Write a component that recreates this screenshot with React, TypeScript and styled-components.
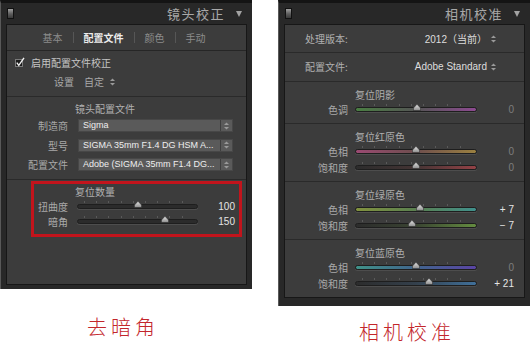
import styled, { createGlobalStyle } from "styled-components";

const GlobalStyle = createGlobalStyle`
  html, body { margin: 0; padding: 0; background: #ffffff; }
  body { font-family: "Noto Sans CJK SC", "Noto Sans", sans-serif; }
`;

const Page = styled.div`
  width: 530px;
  height: 346px;
  overflow: hidden;
  display: flex;
  gap: 26px;
  align-items: flex-start;
`;

const Column = styled.div`
  width: 252px;
  display: flex;
  flex-direction: column;
  align-items: center;
`;

const Frame = styled.div<{ $pad: number }>`
  width: 252px;
  box-sizing: border-box;
  background: #282828;
  border-top: 3px solid #141414;
  border-left: 1px solid #595959;
  padding: 0 5px ${(p) => p.$pad}px 5px;
  display: flex;
  flex-direction: column;
`;

const Header = styled.div`
  height: 21px;
  display: flex;
  align-items: center;
`;

const Toggle = styled.span`
  width: 5px;
  height: 9px;
  margin-left: 1px;
  border: 1px solid #111;
  background: linear-gradient(#a0a0a0, #5c5c5c 55%, #3a3a3a);
`;

const Title = styled.span`
  margin-left: auto;
  font-size: 13px;
  line-height: 1;
  color: #a8a8a8;
  letter-spacing: 1.5px;
`;

const Caret = styled.span`
  width: 0;
  height: 0;
  margin: 1px 5px 0 11px;
  border-left: 3.5px solid transparent;
  border-right: 3.5px solid transparent;
  border-top: 6px solid #a3a3a3;
`;

const Body = styled.div<{ $h: number }>`
  height: ${(p) => p.$h}px;
  box-sizing: border-box;
  overflow: hidden;
  background: #3c3c3c;
  border: 1px solid #171717;
  display: flex;
  flex-direction: column;
  font-size: 10px;
  color: #a9a9a9;
`;

const TabBar = styled.div`
  height: 25px;
  padding-right: 5px;
  display: flex;
  align-items: center;
  justify-content: center;
  gap: 10px;
  border-bottom: 1px solid #262626;
`;

const Tab = styled.span<{ $active?: boolean }>`
  color: ${(p) => (p.$active ? "#ececec" : "#8c8c8c")};
  font-weight: ${(p) => (p.$active ? 700 : 400)};
`;

const TabSep = styled.span`
  width: 1px;
  height: 11px;
  background: #565656;
`;

const Block = styled.div<{ $pt: number; $pb: number }>`
  padding: ${(p) => p.$pt}px 0 ${(p) => p.$pb}px;
  border-bottom: 1px solid #2a2a2a;
  display: flex;
  flex-direction: column;
  &:last-child {
    border-bottom: none;
  }
`;

const CheckRow = styled.div`
  height: 19px;
  padding-left: 8px;
  display: flex;
  align-items: center;
  gap: 6px;
  color: #c4c4c4;
`;

const SettingRow = styled.div`
  height: 19px;
  padding-left: 47px;
  display: flex;
  align-items: center;
  gap: 10px;
`;

const Inline = styled.span`
  display: flex;
  align-items: center;
  gap: 6px;
`;

const SectionTitle = styled.div<{ $indent: number }>`
  height: 15px;
  line-height: 15px;
  padding-left: ${(p) => p.$indent}px;
  color: #b0b0b0;
`;

const FormRow = styled.div`
  height: 19.5px;
  display: flex;
  align-items: center;
`;

const Label = styled.span<{ $w: number }>`
  width: ${(p) => p.$w}px;
  flex: none;
  text-align: right;
  white-space: nowrap;
`;

const Select = styled.div`
  width: 155px;
  height: 13px;
  box-sizing: border-box;
  margin-left: 10px;
  display: flex;
  background: #5a5a5a;
  border: 1px solid #474747;
  font-family: "Liberation Sans", Arial, sans-serif;
  font-size: 9px;
  color: #eeeeee;
`;

const SelectText = styled.span`
  flex: 1;
  padding-left: 4px;
  line-height: 11px;
  white-space: nowrap;
  overflow: hidden;
`;

const SelectSpin = styled.span`
  width: 11px;
  flex: none;
  border-left: 1px solid #3e3e3e;
  display: flex;
  align-items: center;
  justify-content: center;
`;

const Highlight = styled.div`
  margin: 1px 4px 0 24px;
  border: 3px solid #c2141c;
  padding: 0 4px 4px 0;
`;

const SliderRow = styled.div<{ $h: number; $pr: number }>`
  height: ${(p) => p.$h}px;
  padding-right: ${(p) => p.$pr}px;
  display: flex;
  align-items: center;
`;

const Track = styled.div<{ $w: number; $gap: number; $fill: string }>`
  position: relative;
  width: ${(p) => p.$w}px;
  height: 5px;
  box-sizing: border-box;
  margin-left: ${(p) => p.$gap}px;
  border-radius: 3px;
  background: ${(p) => p.$fill};
  border: 1px solid #1e1e1e;
  box-shadow: 0 1px 0 #4d4d4d;
  &::before {
    content: "";
    position: absolute;
    left: 6px;
    right: 6px;
    top: -4px;
    height: 2px;
    background: repeating-linear-gradient(to right, #5a5a5a 0 1px, transparent 1px 12.2px);
  }
`;

const Thumb = styled.svg`
  position: absolute;
  top: -4px;
  width: 8px;
  height: 7px;
  margin-left: -4px;
`;

const Value = styled.span<{ $bright?: boolean }>`
  flex: 1;
  text-align: right;
  font-family: "Liberation Sans", Arial, sans-serif;
  font-size: 10px;
  color: ${(p) => (p.$bright ? "#e6e6e6" : "#7c7c7c")};
`;

const InfoRow = styled.div`
  height: 28px;
  padding: 0 28px 0 20px;
  display: flex;
  align-items: center;
  justify-content: space-between;
  border-bottom: 1px solid #2a2a2a;
  color: #b0b0b0;
`;

const InfoValue = styled.span`
  display: flex;
  align-items: center;
  gap: 4px;
  color: #dedede;
  font-family: "Liberation Sans", "Noto Sans CJK SC", sans-serif;
`;

const Caption = styled.div<{ $top: number; $shift: number }>`
  margin-top: ${(p) => p.$top}px;
  padding-left: ${(p) => (p.$shift > 0 ? p.$shift * 2 : 0)}px;
  padding-right: ${(p) => (p.$shift < 0 ? -p.$shift * 2 : 0)}px;
  font-size: 20px;
  line-height: 29px;
  letter-spacing: 4px;
  font-weight: 300;
  color: #c3262b;
`;

function Spin() {
  return (
    <svg width="5" height="8" viewBox="0 0 5 8">
      <polygon points="0,3 2.5,0.5 5,3" fill="#9a9a9a" />
      <polygon points="0,5 5,5 2.5,7.5" fill="#9a9a9a" />
    </svg>
  );
}

function CheckBox() {
  return (
    <svg width="10" height="11" viewBox="0 0 10 11">
      <rect x="0.5" y="2.5" width="7" height="7" fill="#1c1c1c" stroke="#7a7a7a" />
      <path d="M1.8 5.6 L3.8 8.4 L9 0.8" fill="none" stroke="#f2f2f2" strokeWidth="1.4" />
    </svg>
  );
}

function Slider({
  label,
  labelW,
  gap,
  width,
  pos,
  fill,
  value,
  bright,
  rowH,
  pr,
}: {
  label: string;
  labelW: number;
  gap: number;
  width: number;
  pos: number;
  fill: string;
  value: string;
  bright?: boolean;
  rowH: number;
  pr: number;
}) {
  return (
    <SliderRow $h={rowH} $pr={pr}>
      <Label $w={labelW}>{label}</Label>
      <Track $w={width} $gap={gap} $fill={fill}>
        <Thumb viewBox="0 0 8 7" style={{ left: `${pos}%` }}>
          <defs>
            <linearGradient id="tg" x1="0" y1="0" x2="0" y2="1">
              <stop offset="0" stopColor="#e6e6e6" />
              <stop offset="1" stopColor="#8a8a8a" />
            </linearGradient>
          </defs>
          <path d="M4 0.3 L7.6 4 L7.6 6.6 L0.4 6.6 L0.4 4 Z" fill="url(#tg)" stroke="#2a2a2a" strokeWidth="0.6" />
        </Thumb>
      </Track>
      <Value $bright={bright}>{value}</Value>
    </SliderRow>
  );
}

const groove = "#2b2b2b";

const calibration = [
  {
    title: "复位阴影",
    rows: [
      { label: "色调", pos: 51, fill: "linear-gradient(to right, #4a7e42, #555 50%, #8c4a90)", value: "0", bright: false },
    ],
  },
  {
    title: "复位红原色",
    rows: [
      { label: "色相", pos: 50, fill: "linear-gradient(to right, #9a4a72, #6e4e4e 50%, #9a8040)", value: "0", bright: false },
      { label: "饱和度", pos: 50, fill: "linear-gradient(to right, #2c2c2c, #443434 50%, #944246)", value: "0", bright: false },
    ],
  },
  {
    title: "复位绿原色",
    rows: [
      { label: "色相", pos: 53.5, fill: "linear-gradient(to right, #82923e, #5a8050 50%, #40908c)", value: "+ 7", bright: true },
      { label: "饱和度", pos: 46.5, fill: "linear-gradient(to right, #2c2c2c, #3a4432 50%, #648c40)", value: "− 7", bright: true },
    ],
  },
  {
    title: "复位蓝原色",
    rows: [
      { label: "色相", pos: 50, fill: "linear-gradient(to right, #409288, #40648c 50%, #5a44a4)", value: "0", bright: false },
      { label: "饱和度", pos: 60.5, fill: "linear-gradient(to right, #2c2c2c, #34404c 50%, #40709a)", value: "+ 21", bright: true },
    ],
  },
];

export default function App() {
  return (
    <>
      <GlobalStyle />
      <Page>
        <Column>
          <Frame $pad={4}>
            <Header>
              <Toggle />
              <Title>镜头校正</Title>
              <Caret />
            </Header>
            <Body $h={261}>
              <TabBar>
                <Tab>基本</Tab>
                <TabSep />
                <Tab $active>配置文件</Tab>
                <TabSep />
                <Tab>颜色</Tab>
                <TabSep />
                <Tab>手动</Tab>
              </TabBar>
              <Block $pt={2} $pb={5}>
                <CheckRow>
                  <CheckBox />
                  启用配置文件校正
                </CheckRow>
                <SettingRow>
                  <span>设置</span>
                  <Inline>
                    自定
                    <Spin />
                  </Inline>
                </SettingRow>
              </Block>
              <Block $pt={4} $pb={4}>
                <SectionTitle $indent={68}>镜头配置文件</SectionTitle>
                <FormRow>
                  <Label $w={61}>制造商</Label>
                  <Select>
                    <SelectText>Sigma</SelectText>
                    <SelectSpin>
                      <Spin />
                    </SelectSpin>
                  </Select>
                </FormRow>
                <FormRow>
                  <Label $w={61}>型号</Label>
                  <Select>
                    <SelectText>SIGMA 35mm F1.4 DG HSM A...</SelectText>
                    <SelectSpin>
                      <Spin />
                    </SelectSpin>
                  </Select>
                </FormRow>
                <FormRow>
                  <Label $w={61}>配置文件</Label>
                  <Select>
                    <SelectText>Adobe (SIGMA 35mm F1.4 DG...</SelectText>
                    <SelectSpin>
                      <Spin />
                    </SelectSpin>
                  </Select>
                </FormRow>
              </Block>
              <Block $pt={0} $pb={0}>
                <Highlight>
                  <SectionTitle $indent={41}>复位数量</SectionTitle>
                  <Slider label="扭曲度" labelW={34} gap={9} width={121} pos={50} fill={groove} value="100" bright rowH={15.5} pr={0} />
                  <Slider label="暗角" labelW={34} gap={9} width={121} pos={73} fill={groove} value="150" bright rowH={15.5} pr={0} />
                </Highlight>
              </Block>
            </Body>
          </Frame>
          <Caption $top={23} $shift={-3}>去暗角</Caption>
        </Column>
        <Column>
          <Frame $pad={8}>
            <Header>
              <Toggle />
              <Title>相机校准</Title>
              <Caret />
            </Header>
            <Body $h={274}>
              <InfoRow>
                <span>处理版本:</span>
                <InfoValue>
                  2012（当前）
                  <Spin />
                </InfoValue>
              </InfoRow>
              <InfoRow>
                <span>配置文件:</span>
                <InfoValue>
                  Adobe Standard
                  <Spin />
                </InfoValue>
              </InfoRow>
              {calibration.map((section) => (
                <Block key={section.title} $pt={5} $pb={6}>
                  <SectionTitle $indent={70}>{section.title}</SectionTitle>
                  {section.rows.map((row) => (
                    <Slider
                      key={row.label}
                      label={row.label}
                      labelW={63}
                      gap={7}
                      width={122}
                      pos={row.pos}
                      fill={row.fill}
                      value={row.value}
                      bright={row.bright}
                      rowH={15.5}
                      pr={10}
                    />
                  ))}
                </Block>
              ))}
            </Body>
          </Frame>
          <Caption $top={11} $shift={3}>相机校准</Caption>
        </Column>
      </Page>
    </>
  );
}
